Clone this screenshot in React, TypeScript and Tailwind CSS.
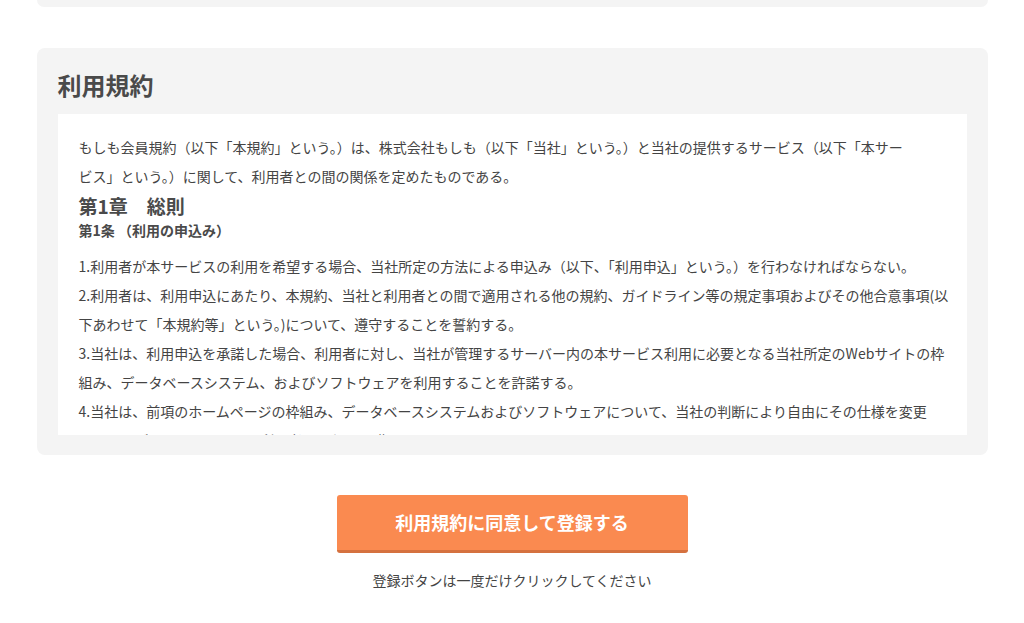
import React from "react";

const font = { fontFamily: '"Noto Sans CJK JP", "Noto Sans", sans-serif' };

export default function App() {
  return (
    <div className="min-h-[623px] bg-white text-[#444]" style={font}>
      <div className="w-[951px] mx-auto h-[7px] bg-[#f4f4f4] rounded-b-[8px]" />
      <div className="w-[951px] mx-auto mt-[41px] bg-[#f4f4f4] rounded-[8px] px-[21px] pt-[20px] pb-[20px]">
        <h2 className="text-[24px] leading-[34px] font-bold text-[#4a4a4a] mb-[12px]">利用規約</h2>
        <div className="bg-white h-[321px] overflow-hidden pl-[21px] pr-[18px] pt-[19px]">
          <p className="text-[14px] leading-[29px]">
            もしも会員規約（以下「本規約」という。）は、株式会社もしも（以下「当社」という。）と当社の提供するサービス（以下「本サー
            <br />
            ビス」という。）に関して、利用者との間の関係を定めたものである。
          </p>
          <h3 className="text-[19px] leading-[26px] font-bold text-[#4a4a4a] mt-[2px]">第1章　総則</h3>
          <h4 className="text-[14px] leading-[22px] font-bold text-[#4a4a4a]">第1条 （利用の申込み）</h4>
          <ol className="text-[14px] leading-[29px] mt-[11px]">
            <li>1.利用者が本サービスの利用を希望する場合、当社所定の方法による申込み（以下、「利用申込」という。）を行わなければならない。</li>
            <li>
              2.利用者は、利用申込にあたり、本規約、当社と利用者との間で適用される他の規約、ガイドライン等の規定事項およびその他合意事項(以
              <br />
              下あわせて「本規約等」という。)について、遵守することを誓約する。
            </li>
            <li>
              3.当社は、利用申込を承諾した場合、利用者に対し、当社が管理するサーバー内の本サービス利用に必要となる当社所定のWebサイトの枠
              <br />
              組み、データベースシステム、およびソフトウェアを利用することを許諾する。
            </li>
            <li>
              4.当社は、前項のホームページの枠組み、データベースシステムおよびソフトウェアについて、当社の判断により自由にその仕様を変更
              <br />
              することができるものとし、利用者はこれを承諾する。
            </li>
          </ol>
        </div>
      </div>
      <div className="flex flex-col items-center mt-[40px]">
        <button className="w-[351px] h-[58px] rounded-[3px] bg-[#fa8a50] border-b-[3px] border-[#d5713f] text-white text-[18px] font-bold">
          利用規約に同意して登録する
        </button>
        <p className="mt-[17px] text-[14px] leading-[20px] text-[#444]">登録ボタンは一度だけクリックしてください</p>
      </div>
    </div>
  );
}
